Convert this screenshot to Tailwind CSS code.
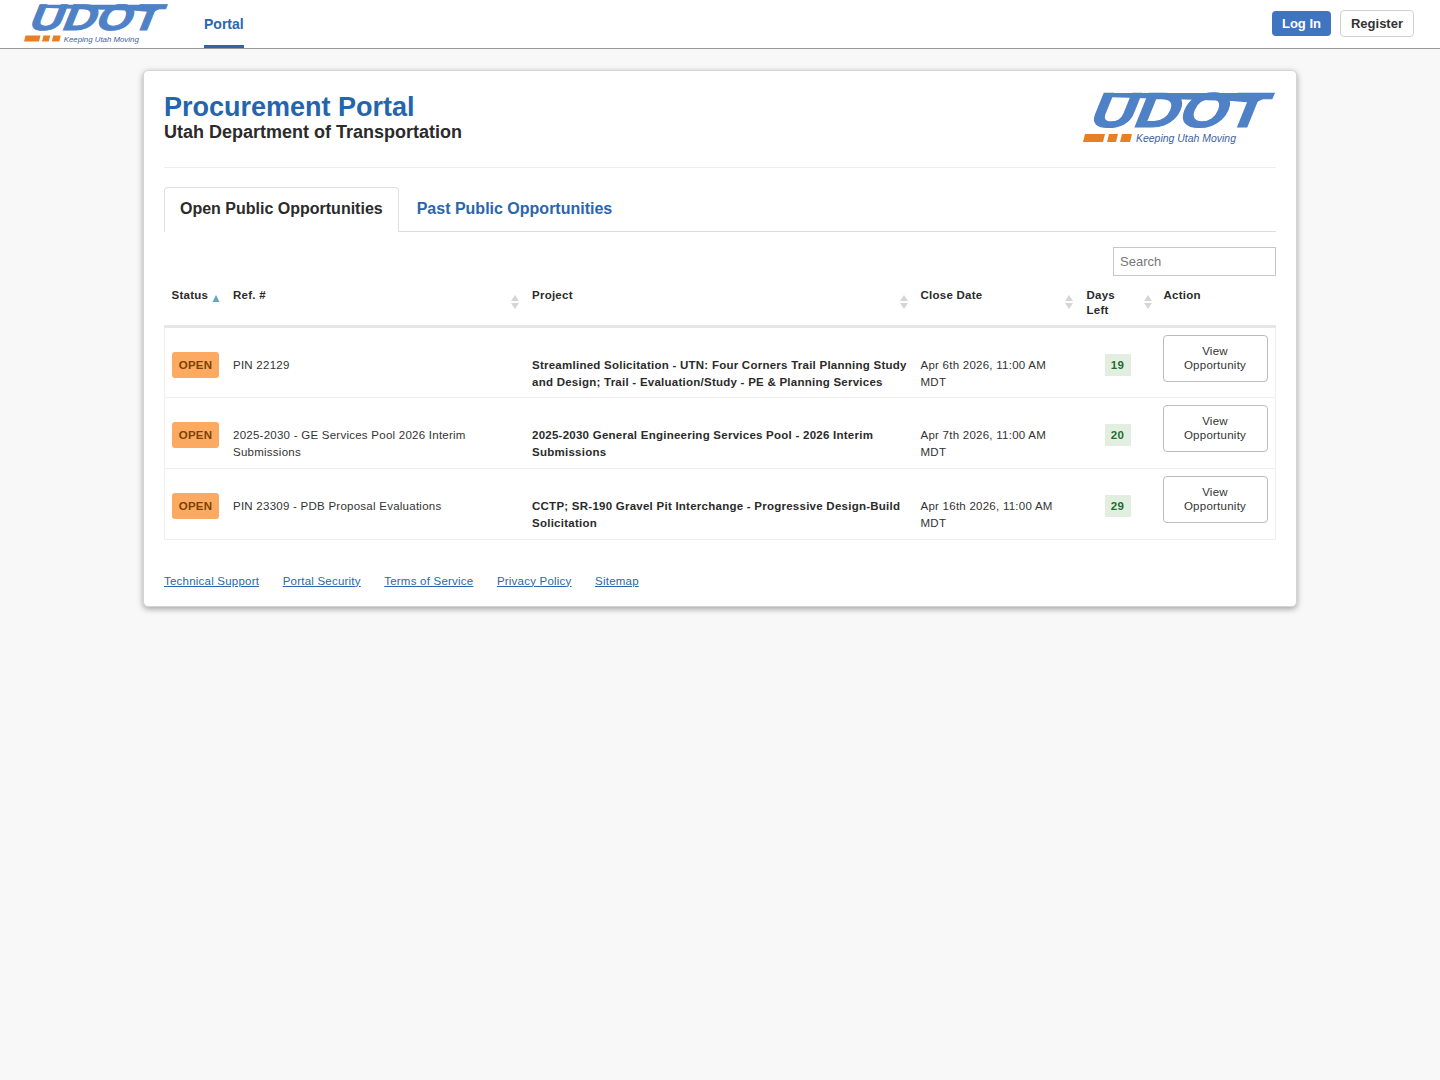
<!DOCTYPE html>
<html lang="en">
<head>
<meta charset="UTF-8" />
<title>Procurement Portal</title>
<script src="https://cdn.jsdelivr.net/npm/@tailwindcss/browser@4"></script>
</head>
<body class="min-h-[1080px] bg-[#f8f8f8] font-['Liberation_Sans',Arial,sans-serif] text-[#212529]">
    <header class="h-[49px] bg-white border-b border-[#9a9a9a] flex items-stretch">
        <div class="w-[204px] pl-[23px] pt-[4px] shrink-0">
            <svg viewBox="0 0 194 52" class="w-[146px] h-[39px] overflow-visible">
                <g transform="translate(5,35) skewX(-22)">
                    <text x="0" y="0" font-family="Liberation Sans" font-weight="700" font-size="49" textLength="174" lengthAdjust="spacingAndGlyphs" fill="#4f81c7" stroke="#4f81c7" stroke-width="1.2">UDOT</text>
                </g>
                <polygon points="22,1 193,1 173,11 150,9 22,5" fill="#4f81c7" />
                <polygon points="1,50 3,42 23,42 21,50" fill="#e97f24" />
                <polygon points="25,50 27,42 36,42 34,50" fill="#e97f24" />
                <polygon points="38,50 40,42 50,42 48,50" fill="#e97f24" />
                <text x="54" y="50" font-family="Liberation Sans" font-style="italic" font-size="10.5" textLength="100" lengthAdjust="spacingAndGlyphs" fill="#3d5f9c">Keeping Utah Moving</text>
            </svg>
        </div>
        <nav class="flex">
            <a href="#" class="h-[48px] px-0 pt-[15px] text-[14px] leading-[18px] font-bold text-[#2b66ad] border-b-[3px] border-[#2b66ad]">Portal</a>
        </nav>
        <div class="ml-auto flex items-start gap-[9px] pt-[10px] pr-[26px]">
            <a href="#" class="h-[25px] mt-[1px] px-[10px] rounded-[4px] bg-[#3f74c0] text-white text-[13px] leading-[25px] font-bold">Log In</a>
            <a href="#" class="h-[27px] px-[10px] rounded-[4px] bg-white border border-[#d0d0d0] text-[#333] text-[13px] leading-[25px] font-bold">Register</a>
        </div>
    </header>

    <main class="w-[1154px] h-[537px] mx-auto mt-[21px] bg-white border border-[#d4d4d4] rounded-[5px] shadow-[0_2px_6px_rgba(0,0,0,0.35)] px-[20px]">
        <div class="h-[97px] border-b border-[#eeeeee] flex justify-between">
            <div class="pt-[21px]">
                <h1 class="text-[27px] leading-[30px] font-bold text-[#2465ac]">Procurement Portal</h1>
                <h2 class="text-[18px] leading-[21px] font-bold text-[#2b2b2b]">Utah Department of Transportation</h2>
            </div>
            <svg viewBox="0 0 194 52" class="w-[194px] h-[52px] mt-[21px] overflow-visible">
                <g transform="translate(5,35) skewX(-22)">
                    <text x="0" y="0" font-family="Liberation Sans" font-weight="700" font-size="49" textLength="174" lengthAdjust="spacingAndGlyphs" fill="#4f81c7" stroke="#4f81c7" stroke-width="1.2">UDOT</text>
                </g>
                <polygon points="22,1 193,1 173,11 150,9 22,5" fill="#4f81c7" />
                <polygon points="1,50 3,42 23,42 21,50" fill="#e97f24" />
                <polygon points="25,50 27,42 36,42 34,50" fill="#e97f24" />
                <polygon points="38,50 40,42 50,42 48,50" fill="#e97f24" />
                <text x="54" y="50" font-family="Liberation Sans" font-style="italic" font-size="10.5" textLength="100" lengthAdjust="spacingAndGlyphs" fill="#3d5f9c">Keeping Utah Moving</text>
            </svg>
        </div>

        <div class="mt-[19px] h-[45px] flex border-b border-[#dddddd]">
            <a href="#" class="h-[45px] px-[15px] bg-white border border-b-0 border-[#e0e0e0] rounded-t-[4px] text-[16px] leading-[42px] font-bold text-[#2b2b2b]">Open Public Opportunities</a>
            <a href="#" class="px-[18px] text-[16px] leading-[44px] font-bold text-[#2b66ad]">Past Public Opportunities</a>
        </div>

        <div class="flex justify-end mt-[15px]">
            <input type="text" placeholder="Search" class="w-[163px] h-[29px] px-[6px] border border-[#c8c8c8] text-[13px] placeholder:text-[#777] outline-none" />
        </div>

        <table class="mt-[5px] w-[1111px] table-fixed border-collapse text-[11.5px] tracking-[0.25px] leading-[17px] text-[#333]">
            <colgroup>
                <col class="w-[62px]" /><col class="w-[299px]" /><col class="w-[389px]" /><col class="w-[166px]" /><col class="w-[77px]" /><col class="w-[118px]" />
            </colgroup>
            <thead>
                <tr class="border-b-[3px] border-[#e6e6e6] text-left align-top font-bold text-[#2b2b2b]">
                    <th class="h-[45px] pl-[7px] pt-[7px] leading-[15px] relative">Status<svg viewBox="0 0 8 8" class="absolute right-[7px] top-[14px] w-[8px] h-[7px]"><path d="M4 0 L8 8 L0 8 Z" fill="#5ea9c4" /></svg></th>
                    <th class="pl-[6.5px] pt-[7px] leading-[15px] relative">Ref. #<svg viewBox="0 0 8 14" class="absolute right-[7px] top-[14px] w-[8px] h-[14px]"><path d="M4 0 L8 6 L0 6 Z M4 14 L8 8 L0 8 Z" fill="#d6d6d6" /></svg></th>
                    <th class="pl-[6.5px] pt-[7px] leading-[15px] relative">Project<svg viewBox="0 0 8 14" class="absolute right-[7px] top-[14px] w-[8px] h-[14px]"><path d="M4 0 L8 6 L0 6 Z M4 14 L8 8 L0 8 Z" fill="#d6d6d6" /></svg></th>
                    <th class="pl-[6px] pt-[7px] leading-[15px] relative">Close Date<svg viewBox="0 0 8 14" class="absolute right-[8px] top-[14px] w-[8px] h-[14px]"><path d="M4 0 L8 6 L0 6 Z M4 14 L8 8 L0 8 Z" fill="#d6d6d6" /></svg></th>
                    <th class="pl-[6px] pt-[7px] leading-[15px] relative">Days<br />Left<svg viewBox="0 0 8 14" class="absolute right-[6px] top-[14px] w-[8px] h-[14px]"><path d="M4 0 L8 6 L0 6 Z M4 14 L8 8 L0 8 Z" fill="#d6d6d6" /></svg></th>
                    <th class="pl-[6px] pt-[7px] leading-[15px]">Action</th>
                </tr>
            </thead>
            <tbody class="border-x border-b border-[#eeeeee]">
                <tr class="h-[71px] border-b border-[#eeeeee] align-baseline">
                    <td class="pl-[7px]"><span class="inline-block w-[47px] h-[26px] rounded-[3px] bg-[#fcaa62] text-center text-[#7a4205] font-bold leading-[26px]">OPEN</span></td>
                    <td class="pl-[6.5px] pr-[40px]">PIN 22129</td>
                    <td class="pl-[6.5px] font-bold text-[#2b2b2b]">Streamlined Solicitation - UTN: Four Corners Trail Planning Study and Design; Trail - Evaluation/Study - PE &amp; Planning Services</td>
                    <td class="pl-[6px] pr-[10px]">Apr 6th 2026, 11:00 AM MDT</td>
                    <td class="pl-[24px]"><span class="inline-block w-[26px] h-[22px] bg-[#e2efe0] text-center text-[#1f6b34] font-bold leading-[22px]">19</span></td>
                    <td class="pl-[5px] pt-[7px]"><a href="#" class="inline-block w-[105px] h-[47px] pt-[8px] leading-[14px] bg-white border border-[#bbbbbb] rounded-[4px] text-center">View<br />Opportunity</a></td>
                </tr>
                <tr class="h-[71px] border-b border-[#eeeeee] align-baseline">
                    <td class="pl-[7px]"><span class="inline-block w-[47px] h-[26px] rounded-[3px] bg-[#fcaa62] text-center text-[#7a4205] font-bold leading-[26px]">OPEN</span></td>
                    <td class="pl-[6.5px] pr-[40px]">2025-2030 - GE Services Pool 2026 Interim Submissions</td>
                    <td class="pl-[6.5px] font-bold text-[#2b2b2b]">2025-2030 General Engineering Services Pool - 2026 Interim Submissions</td>
                    <td class="pl-[6px] pr-[10px]">Apr 7th 2026, 11:00 AM MDT</td>
                    <td class="pl-[24px]"><span class="inline-block w-[26px] h-[22px] bg-[#e2efe0] text-center text-[#1f6b34] font-bold leading-[22px]">20</span></td>
                    <td class="pl-[5px] pt-[7px]"><a href="#" class="inline-block w-[105px] h-[47px] pt-[8px] leading-[14px] bg-white border border-[#bbbbbb] rounded-[4px] text-center">View<br />Opportunity</a></td>
                </tr>
                <tr class="h-[71px] align-baseline">
                    <td class="pl-[7px]"><span class="inline-block w-[47px] h-[26px] rounded-[3px] bg-[#fcaa62] text-center text-[#7a4205] font-bold leading-[26px]">OPEN</span></td>
                    <td class="pl-[6.5px] pr-[40px]">PIN 23309 - PDB Proposal Evaluations</td>
                    <td class="pl-[6.5px] font-bold text-[#2b2b2b]">CCTP; SR-190 Gravel Pit Interchange - Progressive Design-Build Solicitation</td>
                    <td class="pl-[6px] pr-[10px]">Apr 16th 2026, 11:00 AM MDT</td>
                    <td class="pl-[24px]"><span class="inline-block w-[26px] h-[22px] bg-[#e2efe0] text-center text-[#1f6b34] font-bold leading-[22px]">29</span></td>
                    <td class="pl-[5px] pt-[7px]"><a href="#" class="inline-block w-[105px] h-[47px] pt-[8px] leading-[14px] bg-white border border-[#bbbbbb] rounded-[4px] text-center">View<br />Opportunity</a></td>
                </tr>
            </tbody>
        </table>

        <footer class="mt-[33px] flex gap-[23.5px] text-[11.5px] tracking-[0.22px] leading-[16px] text-[#2b66ad]">
            <a href="#" class="underline">Technical Support</a>
            <a href="#" class="underline">Portal Security</a>
            <a href="#" class="underline">Terms of Service</a>
            <a href="#" class="underline">Privacy Policy</a>
            <a href="#" class="underline">Sitemap</a>
        </footer>
    </main>
</body>
</html>
